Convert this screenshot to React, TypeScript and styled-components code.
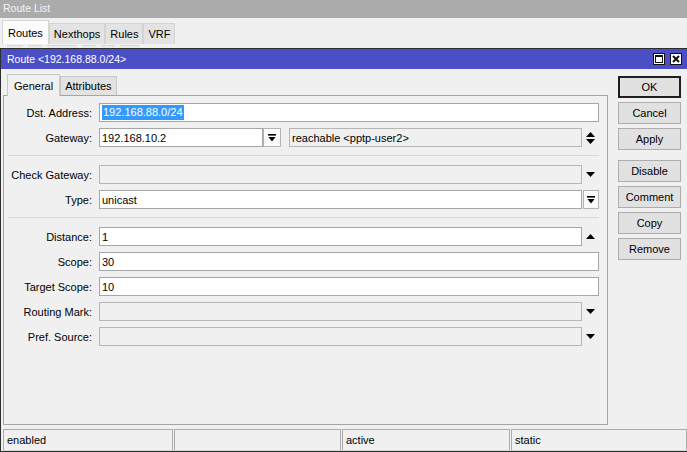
import React from 'react';
import styled, { createGlobalStyle } from 'styled-components';

const GlobalStyle = createGlobalStyle`
  html, body {
    margin: 0;
    padding: 0;
  }
  body {
    background: #f0f0f0;
    font-family: "Liberation Sans", Arial, sans-serif;
    font-size: 11px;
    color: #000;
    overflow: hidden;
  }
`;

const Screen = styled.div`
  width: 687px;
  height: 452px;
  display: flex;
  flex-direction: column;
  overflow: hidden;
`;

// window behind the dialog
const ListTitle = styled.div`
  flex: none;
  height: 18px;
  padding-left: 3px;
  background: #ababab;
  color: #f4f4f4;
  font-size: 10.5px;
  line-height: 17px;
`;

const ListTabs = styled.div`
  flex: none;
  height: 26px;
  display: flex;
  align-items: flex-end;
  padding-left: 2px;
`;

const ListTab = styled.div<{ $active?: boolean }>`
  height: ${p => (p.$active ? 23 : 20)}px;
  padding: 0 ${p => (p.$active ? 5 : 4)}px;
  display: flex;
  align-items: center;
  background: ${p => (p.$active ? '#fbfbfb' : '#e3e3e3')};
  border: 1px solid #d4d4d4;
  border-bottom: none;
`;

const ToolbarPeek = styled.div`
  flex: none;
  height: 4px;
  display: flex;
  gap: 5px;
  padding-left: 7px;
  align-items: flex-end;
`;

const PeekButton = styled.div<{ $w: number }>`
  width: ${p => p.$w}px;
  height: 2px;
  border-top: 1px solid #d6d6d6;
  background: #ebebeb;
`;

// dialog
const Dialog = styled.div`
  flex: 1;
  min-height: 0;
  display: flex;
  flex-direction: column;
  border: 1px solid #2e2e2e;
  border-right: none;
  background: #f0f0f0;
`;

const DialogTitle = styled.div`
  flex: none;
  height: 20px;
  display: flex;
  align-items: center;
  justify-content: space-between;
  padding: 0 5px 0 6px;
  background: #4b4fc6;
  color: #fff;
  font-size: 10.5px;
`;

const TitleButtons = styled.div`
  display: flex;
  gap: 5px;
`;

const TitleButton = styled.div`
  width: 12px;
  height: 12px;
  display: flex;
  align-items: center;
  justify-content: center;
  background: #fff;
`;

const DialogBody = styled.div`
  flex: 1;
  min-height: 0;
  display: flex;
  gap: 10px;
  padding: 5px 0 0 2px;
`;

const FormColumn = styled.div`
  width: 605px;
  display: flex;
  flex-direction: column;
`;

const FormTabs = styled.div`
  height: 21px;
  display: flex;
  align-items: flex-end;
  padding-left: 4px;
`;

const FormTab = styled.div<{ $active?: boolean }>`
  height: ${p => (p.$active ? 21 : 18)}px;
  padding: 0 ${p => (p.$active ? 6 : 4)}px;
  display: flex;
  align-items: center;
  background: ${p => (p.$active ? '#f0f0f0' : '#e2e2e2')};
  border: 1px solid #c8c8c8;
  border-bottom: none;
  margin-bottom: ${p => (p.$active ? -1 : 0)}px;
  position: relative;
  z-index: ${p => (p.$active ? 1 : 0)};
`;

const Panel = styled.div`
  flex: 1;
  display: flex;
  flex-direction: column;
  gap: 6px;
  padding: 7px 8px 0 0;
  border: 1px solid #a5a5a5;
`;

const FormRow = styled.div`
  height: 19px;
  display: flex;
  align-items: center;
`;

const Label = styled.div`
  flex: none;
  width: 88px;
  margin-right: 7px;
  text-align: right;
  white-space: nowrap;
`;

const Field = styled.div<{ $gray?: boolean; $width?: number; $gap?: number }>`
  ${p => (p.$width ? `width: ${p.$width}px; flex: none;` : 'flex: 1;')}
  height: 19px;
  box-sizing: border-box;
  margin-left: ${p => p.$gap ?? 0}px;
  display: flex;
  align-items: center;
  padding-left: 2px;
  border: 1px solid ${p => (p.$gray ? '#b6b6b6' : '#a6a6a6')};
  background: ${p => (p.$gray ? '#f0f0f0' : '#fff')};
  white-space: nowrap;
  overflow: hidden;
`;

const Selected = styled.span`
  background: #3399ff;
  color: #fff;
  padding: 1px 1px 2px;
`;

const Slot = styled.div`
  flex: none;
  width: 17px;
  height: 19px;
  display: flex;
  align-items: center;
  justify-content: center;
`;

const PickButton = styled.div<{ $width: number; $gap?: number }>`
  flex: none;
  width: ${p => p.$width}px;
  height: 19px;
  box-sizing: border-box;
  margin-left: ${p => p.$gap ?? 0}px;
  display: flex;
  align-items: center;
  justify-content: center;
  border: 1px solid #b3b3b3;
  background: #fbfbfb;
`;

const Separator = styled.div`
  height: 1px;
  margin: 2px 0 3px 4px;
  background: #dadada;
`;

const ButtonColumn = styled.div`
  width: 63px;
  display: flex;
  flex-direction: column;
  gap: 4px;
  padding-top: 2px;
`;

const Button = styled.div<{ $default?: boolean; $spaced?: boolean }>`
  height: 22px;
  box-sizing: border-box;
  display: flex;
  align-items: center;
  justify-content: center;
  background: #e1e1e1;
  border: ${p => (p.$default ? '2px solid #1f1f1f' : '1px solid #adadad')};
  margin-top: ${p => (p.$spaced ? 6 : 0)}px;
`;

const StatusBar = styled.div`
  flex: none;
  height: 22px;
  display: flex;
  gap: 1px;
  margin: 4px 0 0 2px;
`;

const StatusCell = styled.div<{ $width?: number }>`
  ${p => (p.$width ? `width: ${p.$width}px; flex: none;` : 'flex: 1;')}
  box-sizing: border-box;
  padding-left: 3px;
  line-height: 20px;
  border: 1px solid #acacac;
  border-bottom-color: #d8d8d8;
`;

const Down = () => (
  <svg width="9" height="5" viewBox="0 0 9 5">
    <path d="M0 0H9L4.5 5Z" fill="#000" />
  </svg>
);

const Up = () => (
  <svg width="9" height="5" viewBox="0 0 9 5">
    <path d="M0 5H9L4.5 0Z" fill="#000" />
  </svg>
);

const UpDown = () => (
  <svg width="9" height="12" viewBox="0 0 9 12">
    <path d="M0 5H9L4.5 0Z M0 7H9L4.5 12Z" fill="#000" />
  </svg>
);

const PickIcon = () => (
  <svg width="8" height="8" viewBox="0 0 8 8">
    <rect x="0" y="0" width="8" height="1.6" fill="#000" />
    <path d="M0.5 3H7.5L4 7.5Z" fill="#000" />
  </svg>
);

const MaxIcon = () => (
  <svg width="12" height="12" viewBox="0 0 12 12">
    <rect x="0.5" y="0.5" width="11" height="11" fill="#fff" stroke="#111" />
    <rect x="2.5" y="2.5" width="7" height="7" fill="none" stroke="#111" />
    <rect x="2" y="2" width="8" height="2" fill="#111" />
  </svg>
);

const CloseIcon = () => (
  <svg width="12" height="12" viewBox="0 0 12 12">
    <rect x="0.5" y="0.5" width="11" height="11" fill="#fff" stroke="#111" />
    <path d="M3 3L9 9M9 3L3 9" stroke="#111" strokeWidth="2" />
  </svg>
);

export default function App() {
  return (
    <Screen>
      <GlobalStyle />
      <ListTitle>Route List</ListTitle>
      <ListTabs>
        <ListTab $active>Routes</ListTab>
        <ListTab>Nexthops</ListTab>
        <ListTab>Rules</ListTab>
        <ListTab>VRF</ListTab>
      </ListTabs>
      <ToolbarPeek>
        <PeekButton $w={16} />
        <PeekButton $w={14} />
        <PeekButton $w={30} />
        <PeekButton $w={14} />
        <PeekButton $w={14} />
        <PeekButton $w={20} />
      </ToolbarPeek>

      <Dialog>
        <DialogTitle>
          <span>Route &lt;192.168.88.0/24&gt;</span>
          <TitleButtons>
            <TitleButton><MaxIcon /></TitleButton>
            <TitleButton><CloseIcon /></TitleButton>
          </TitleButtons>
        </DialogTitle>

        <DialogBody>
          <FormColumn>
            <FormTabs>
              <FormTab $active>General</FormTab>
              <FormTab>Attributes</FormTab>
            </FormTabs>
            <Panel>
              <FormRow>
                <Label>Dst. Address:</Label>
                <Field><Selected>192.168.88.0/24</Selected></Field>
              </FormRow>
              <FormRow>
                <Label>Gateway:</Label>
                <Field $width={164}>192.168.10.2</Field>
                <PickButton $width={18}><PickIcon /></PickButton>
                <Field $gray $gap={8}>reachable &lt;pptp-user2&gt;</Field>
                <Slot><UpDown /></Slot>
              </FormRow>
              <Separator />
              <FormRow>
                <Label>Check Gateway:</Label>
                <Field $gray />
                <Slot><Down /></Slot>
              </FormRow>
              <FormRow>
                <Label>Type:</Label>
                <Field>unicast</Field>
                <PickButton $width={16} $gap={1}><PickIcon /></PickButton>
              </FormRow>
              <Separator />
              <FormRow>
                <Label>Distance:</Label>
                <Field>1</Field>
                <Slot><Up /></Slot>
              </FormRow>
              <FormRow>
                <Label>Scope:</Label>
                <Field>30</Field>
              </FormRow>
              <FormRow>
                <Label>Target Scope:</Label>
                <Field>10</Field>
              </FormRow>
              <FormRow>
                <Label>Routing Mark:</Label>
                <Field $gray />
                <Slot><Down /></Slot>
              </FormRow>
              <FormRow>
                <Label>Pref. Source:</Label>
                <Field $gray />
                <Slot><Down /></Slot>
              </FormRow>
            </Panel>
          </FormColumn>

          <ButtonColumn>
            <Button $default>OK</Button>
            <Button>Cancel</Button>
            <Button>Apply</Button>
            <Button $spaced>Disable</Button>
            <Button>Comment</Button>
            <Button>Copy</Button>
            <Button>Remove</Button>
          </ButtonColumn>
        </DialogBody>

        <StatusBar>
          <StatusCell $width={170}>enabled</StatusCell>
          <StatusCell $width={167}></StatusCell>
          <StatusCell $width={168}>active</StatusCell>
          <StatusCell>static</StatusCell>
        </StatusBar>
      </Dialog>
    </Screen>
  );
}
